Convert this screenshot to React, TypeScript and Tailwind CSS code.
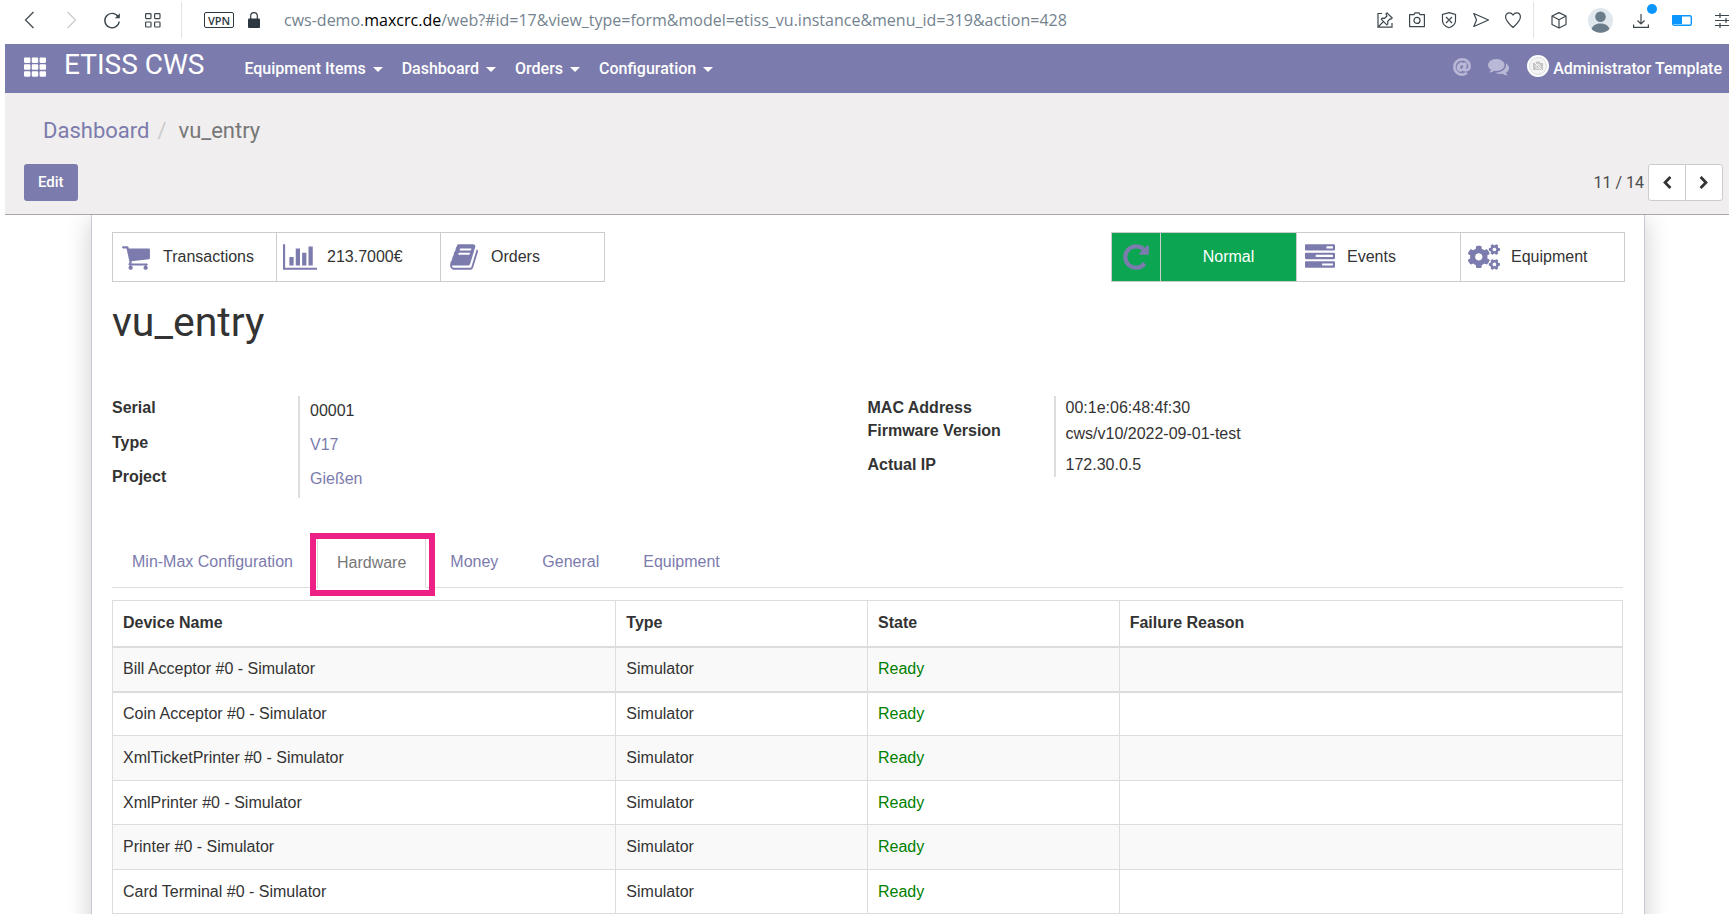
import type { ReactNode } from "react"
import { FaAt, FaCogs, FaTh } from "react-icons/fa"

type GlyphProps = { d: string; box?: string; className?: string }

function Glyph({ d, box = "0 0 1792 1792", className }: GlyphProps) {
  return (
    <svg viewBox={box} fill="currentColor" className={className} aria-hidden="true">
      <path d={d} />
    </svg>
  )
}

function Line({ children }: { children: ReactNode }) {
  return (
    <svg
      viewBox="0 0 16 16"
      fill="none"
      stroke="currentColor"
      strokeWidth="1.2"
      className="size-4 shrink-0 overflow-visible"
      aria-hidden="true"
    >
      {children}
    </svg>
  )
}

const CART =
  "M704 1536q0 52-38 90t-90 38-90-38-38-90 38-90 90-38 90 38 38 90zm896 0q0 52-38 90t-90 38-90-38-38-90 38-90 90-38 90 38 38 90zm128-1088v512q0 24-16.5 42.5t-40.5 21.5l-1044 122q13 60 13 70 0 16-24 64h920q26 0 45 19t19 45-19 45-45 19h-1024q-26 0-45-19t-19-45q0-11 8-31.5t16-36 21.5-40 15.5-29.5l-177-823h-204q-26 0-45-19t-19-45 19-45 45-19h256q16 0 28.5 6.5t19.5 15.5 13 24.5 8 26 5.5 29.5 4.5 26h1201q26 0 45 19t19 45z"
const CHART =
  "M640 896v512h-256v-512h256zm384-512v1024h-256v-1024h256zm1024 1152v128h-2048v-1536h128v1408h1920zm-640-896v768h-256v-768h256zm384-384v1152h-256v-1152h256z"
const BOOK =
  "M1703 478q40 57 18 129l-275 906q-19 64-76.5 107.5t-122.5 43.5h-923q-77 0-148.5-53.5t-99.5-131.5q-24-67-2-127 0-4 3-27t4-37q1-8-3-21.5t-3-19.5q2-11 8-21t16.5-23.5 16.5-23.5q23-38 45-91.5t30-91.5q3-10 .5-30t-.5-28q3-11 17-28t17-23q21-36 42-92t25-90q1-9-2.5-32t.5-28q4-13 22-30.5t22-22.5q19-26 42.5-84.5t27.5-96.5q1-8-3-25.5t-2-26.5q2-8 9-18t18-23 17-21q8-12 16.5-30.5t15-35 16-36 19.5-32 26.5-23.5 36-11.5 47.5 5.5l-1 3q38-9 51-9h761q74 0 114 56t18 130l-274 906q-36 119-71.5 153.5t-128.5 34.5h-869q-27 0-38 15-11 16-1 43 24 70 144 70h923q29 0 56-15.5t35-41.5l300-987q7-22 5-57 38 15 59 43zm-1064 2q-4 13 2 22.5t20 9.5h608q13 0 25.5-9.5t16.5-22.5l21-64q4-13-2-22.5t-20-9.5h-608q-13 0-25.5 9.5t-16.5 22.5zm-83 256q-4 13 2 22.5t20 9.5h608q13 0 25.5-9.5t16.5-22.5l21-64q4-13-2-22.5t-20-9.5h-608q-13 0-25.5 9.5t-16.5 22.5z"
const REPEAT =
  "M1664 256v448q0 26-19 45t-45 19h-448q-42 0-59-40-17-39 14-69l138-138q-148-137-349-137-104 0-198.5 40.5t-163.5 109.5-109.5 163.5-40.5 198.5 40.5 198.5 109.5 163.5 163.5 109.5 198.5 40.5q119 0 225-52t179-147q7-10 23-12 15 0 25 9l137 138q9 8 9.5 20.5t-7.5 22.5q-109 132-264 204.5t-327 72.5q-156 0-298-61t-245-164-164-245-61-298 61-298 164-245 245-164 298-61q147 0 284.5 55.5t244.5 156.5l130-129q29-31 70-14 39 17 39 59z"
const TASKS =
  "M1024 1408h640v-128h-640v128zm-384-512h1024v-128h-1024v128zm640-512h384v-128h-384v128zm512 832v256q0 26-19 45t-45 19h-1664q-26 0-45-19t-19-45v-256q0-26 19-45t45-19h1664q26 0 45 19t19 45zm0-512v256q0 26-19 45t-45 19h-1664q-26 0-45-19t-19-45v-256q0-26 19-45t45-19h1664q26 0 45 19t19 45zm0-512v256q0 26-19 45t-45 19h-1664q-26 0-45-19t-19-45v-256q0-26 19-45t45-19h1664q26 0 45 19t19 45z"
const COMMENTS =
  "M1408 768q0 139-94 257t-256.5 186.5-353.5 68.5q-86 0-176-16-124 88-278 128-36 9-86 16h-3q-11 0-20.5-8t-11.5-21q-1-3-1-6.5t.5-6.5 2-6l2.5-5 3.5-5.5 4-5 4.5-5 4-4.5q5-6 23-25t26-29.5 22.5-29 25-38.5 20.5-44q-124-72-195-177t-71-224q0-139 94-257t256.5-186.5 353.5-68.5 353.5 68.5 256.5 186.5 94 257zm384 256q0 120-71 224.5t-195 176.5q10 24 20.5 44t25 38.5 22.5 29 26 29.5 23 25q1 1 4 4.5t4.5 5 4 5 3.5 5.5l2.5 5 2 6 .5 6.5-1 6.5q-3 14-13 22t-22 7q-50-7-86-16-154-40-278-128-90 16-176 16-271 0-472-132 58 4 88 4 161 0 309-45t264-129q125-92 192-212t67-254q0-77-23-152 129 71 204 178t75 230z"
const CHEVRON_LEFT =
  "M1427 301l-531 531 531 531q19 19 19 45t-19 45l-166 166q-19 19-45 19t-45-19l-742-742q-19-19-19-45t19-45l742-742q19-19 45-19t45 19l166 166q19 19 19 45t-19 45z"
const CHEVRON_RIGHT =
  "M1363 877l-742 742q-19 19-45 19t-45-19l-166-166q-19-19-19-45t19-45l531-531-531-531q-19-19-19-45t19-45l166-166q19-19 45-19t45 19l742 742q19 19 19 45t-19 45z"

function BrowserBar() {
  return (
    <div className="flex h-11 items-center bg-white pb-1 text-[#3c464d]">
      <div className="flex shrink-0 items-center gap-[25px] pl-[22px]">
        <button aria-label="Back">
          <Line>
            <path d="M11.5 0 3.5 8l8 8" />
          </Line>
        </button>
        <button aria-label="Forward" className="text-[#c9c9c9]">
          <Line>
            <path d="m4.5 0 8 8-8 8" />
          </Line>
        </button>
        <button aria-label="Reload">
          <Line>
            <path d="M14 4.5A7.2 7.2 0 1 0 15.2 9.5" strokeWidth="1.4" />
            <path d="M15.8 1.2v5h-5z" fill="currentColor" stroke="none" />
          </Line>
        </button>
        <button aria-label="Speed dial">
          <Line>
            <rect x=".6" y="1.6" width="5.4" height="5" rx=".8" />
            <rect x="9.6" y="1.6" width="5.4" height="5" rx=".8" />
            <rect x=".6" y="10" width="5.4" height="5" rx=".8" />
            <rect x="9.6" y="10" width="5.4" height="5" rx=".8" />
          </Line>
        </button>
      </div>
      <div className="ml-5 h-9 w-px shrink-0 bg-[#e3e3e3]" />
      <span className="ml-[22px] flex h-4 w-[30px] shrink-0 items-center justify-center rounded-xs border border-[#2c3841] font-['Open_Sans',sans-serif] text-[11px] leading-none font-semibold text-[#2c3841]">
        VPN
      </span>
      <svg viewBox="0 0 12 16" className="ml-3.5 h-4 w-3 shrink-0" aria-hidden="true">
        <path d="M2.7 7V4a3.3 3.3 0 0 1 6.6 0v3" fill="none" stroke="#2c3841" strokeWidth="1.2" />
        <rect y="6.5" width="12" height="9.5" rx="1" fill="#2c3841" />
      </svg>
      <p className="ml-6 min-w-0 flex-1 truncate font-['Open_Sans',sans-serif] text-base text-[#74838f]">
        cws-demo.<span className="text-black">maxcrc.de</span>
        /web?#id=17&amp;view_type=form&amp;model=etiss_vu.instance&amp;menu_id=319&amp;action=428
      </p>
      <div className="flex shrink-0 items-center gap-4">
        <Line>
          <path d="M5 1.500H1v13.700h14V11M1 15.200 6.500 9.500" />
          <path d="m10 .8 5.200 5.200-1.200 1.200-1-.3-2.300 2.600.1 2.300-1 1-5.600-5.600 1-1 2.400.1L10 4 9 2z" strokeLinejoin="round" />
        </Line>
        <Line>
          <path d="M.6 2.600H5L6 .8h4l1 1.800h4.400v12H.6z" strokeLinejoin="round" />
          <circle cx="8" cy="8.400" r="3" />
        </Line>
        <Line>
          <path d="m8 .6 6.500 1.900v6c0 3.500-3 6-6.500 7.200C4.500 14.500 1.500 12 1.500 8.500v-6zM5 5l6 6M11 5l-6 6" />
        </Line>
        <Line>
          <path d="M.8 1.500 15.500 8 .8 14.500 3.500 8z" strokeLinejoin="round" />
        </Line>
        <Line>
          <path d="M8 15.500C3 11 .6 8.500.6 5 .6 2.300 2.300.8 4.400.8 6 .8 7.200 1.700 8 3 8.800 1.700 10 .8 11.600.8c2.100 0 3.800 1.500 3.800 4.200 0 3.500-2.400 6-7.400 10.500z" />
        </Line>
      </div>
      <div className="ml-3 h-9 w-px shrink-0 bg-[#e3e3e3]" />
      <div className="ml-[17px] flex shrink-0 items-center">
        <Line>
          <path d="M8 .6 15 4v8.500L8 16l-7-3.500V4zM1 4l7 3.700L15 4M8 7.700V16" strokeLinejoin="round" />
        </Line>
        <svg viewBox="0 0 25 25" className="ml-[21px] size-[25px]" aria-hidden="true">
          <circle cx="12.500" cy="12.500" r="12.500" fill="#e0e8ee" />
          <circle cx="12.500" cy="8.700" r="5.300" fill="#6b7c8b" />
          <path d="M3.500 21c1.500-4 5-5.500 9-5.500s7.500 1.500 9 5.500c-5 5-13 5-18 0z" fill="#6b7c8b" />
        </svg>
        <span className="relative ml-5">
          <Line>
            <path d="M8 2v9.500M4.500 8.500 8 12l3.500-3.500M.6 12.500v2.900h14.800v-2.900" />
          </Line>
          <span className="absolute -top-2 left-3.5 size-2.5 rounded-full bg-[#0a96fc]" />
        </span>
        <svg viewBox="0 0 20 11" className="ml-[23px] h-[11px] w-5" aria-hidden="true">
          <rect x=".7" y=".7" width="18.600" height="9.600" rx="1.500" fill="none" stroke="#0a96fc" strokeWidth="1.400" />
          <path d="M0 1a1 1 0 0 1 1-1h9v9H0z" fill="#0a96fc" />
        </svg>
        <svg
          viewBox="0 0 14 16"
          fill="none"
          stroke="currentColor"
          strokeWidth="1.200"
          className="ml-[23px] h-4 w-3.5"
          aria-hidden="true"
        >
          <path d="M0 3.500h14M0 8.500h14M0 13.500h14M5 1v5M11 6v5M5 11v5" />
        </svg>
      </div>
    </div>
  )
}

function Caret() {
  return (
    <span className="ml-[7px] inline-block border-x-[5px] border-t-[5px] border-x-transparent border-t-white align-middle" />
  )
}

function Navbar() {
  return (
    <header className="flex h-[49px] items-center overflow-hidden bg-[#7c7bad] pl-[19px] font-[Roboto,sans-serif] text-white">
      <button aria-label="Applications" className="mb-1">
        <FaTh className="size-[22px]" />
      </button>
      <span className="ml-[18px] pb-2 text-[28px] leading-9 whitespace-nowrap">ETISS CWS</span>
      <nav className="ml-10 flex gap-[19px] text-base font-medium">
        {["Equipment Items", "Dashboard", "Orders", "Configuration"].map((item) => (
          <button key={item} className="whitespace-nowrap">
            {item}
            <Caret />
          </button>
        ))}
      </nav>
      <div className="ml-auto flex shrink-0 items-center">
        <FaAt className="mb-1 size-[18px] text-[#b9b8d6]" stroke="currentColor" strokeWidth="14" />
        <Glyph d={COMMENTS} className="mb-1 ml-[17px] size-[21px] text-[#b9b8d6]" />
        <span className="mb-1.5 ml-[18px] flex size-[22px] items-center justify-center rounded-full bg-white">
          <svg viewBox="0 0 18 18" className="size-[18px]" aria-hidden="true">
            <circle cx="9" cy="9" r="8.500" fill="#f4f4f4" stroke="#dcdcdc" />
            <path d="M4 6h2.500l1-1.500h3L11.500 6H14v7H4z" fill="#c4c4c4" />
            <circle cx="9" cy="9.300" r="2.200" fill="none" stroke="#f4f4f4" />
            <path d="m3 3 12 12" stroke="#f4f4f4" />
          </svg>
        </span>
        <button className="-mr-2.5 ml-1 text-base font-medium">
          Administrator Template
          <Caret />
        </button>
      </div>
    </header>
  )
}

function ControlPanel() {
  return (
    <div className="border-b border-[#a8a8a8] bg-[#f0eeee] pr-1.5 pb-[13px] pl-[19px] font-[Roboto,sans-serif]">
      <ol className="flex pt-6 pl-[19px] text-[22px] leading-7">
        <li>
          <a href="#dashboard" className="text-[#7c7bad]">
            Dashboard
          </a>
        </li>
        <li className="px-2 text-[#ccc]">/</li>
        <li className="ml-1 text-[#777]">vu_entry</li>
      </ol>
      <div className="mt-[19px] flex items-center">
        <button className="h-[37px] rounded-[3px] bg-[#7c7bad] px-3.5 text-[15px] font-medium text-white">Edit</button>
        <span className="ml-auto text-base text-[#4c4c4c]">11 / 14</span>
        <div className="ml-1 flex">
          <button
            aria-label="Previous"
            className="flex h-[37px] w-[38px] items-center justify-center rounded-l-[3px] border border-[#ccc] bg-white"
          >
            <Glyph d={CHEVRON_LEFT} className="size-3.5 text-[#333]" />
          </button>
          <button
            aria-label="Next"
            className="-ml-px flex h-[37px] w-[38px] items-center justify-center rounded-r-[3px] border border-[#ccc] bg-white"
          >
            <Glyph d={CHEVRON_RIGHT} className="size-3.5 text-[#333]" />
          </button>
        </div>
      </div>
    </div>
  )
}

function StatButton({ icon, label }: { icon: ReactNode; label: string }) {
  return (
    <button className="-ml-px flex h-[50px] w-[165px] items-center border border-[#ccc] bg-white">
      <span className="flex w-[46px] justify-center text-[#7c7bad]">{icon}</span>
      <span className="ml-1">{label}</span>
    </button>
  )
}

function ButtonBox() {
  return (
    <div className="-mr-0.5 flex justify-between">
      <div className="flex pl-px">
        <StatButton icon={<Glyph d={CART} className="size-[30px]" />} label="Transactions" />
        <StatButton icon={<Glyph d={CHART} box="0 0 2048 1792" className="h-[30px] w-[34px]" />} label="213.7000€" />
        <StatButton icon={<Glyph d={BOOK} className="size-[30px]" />} label="Orders" />
      </div>
      <div className="flex">
        <button
          aria-label="Refresh"
          className="flex h-[50px] w-[50px] items-center justify-center border border-[#ccc] bg-[#0ca551]"
        >
          <Glyph d={REPEAT} className="size-[30px] text-[#7c7bad]" />
        </button>
        <button className="-ml-px h-[50px] w-[137px] border border-[#ccc] bg-[#0ca551] text-white">Normal</button>
        <StatButton icon={<Glyph d={TASKS} className="size-[30px]" />} label="Events" />
        <StatButton icon={<FaCogs className="size-8" />} label="Equipment" />
      </div>
    </div>
  )
}

function Details() {
  const label = "w-[186px] font-bold leading-6"
  const value = "flex-1 border-l-2 border-[#ddd] pl-2.5 leading-6"
  return (
    <div className="mt-[49px] grid grid-cols-2 items-start">
      <dl>
        <div className="flex h-[34px]">
          <dt className={label}>Serial</dt>
          <dd className={`${value} pt-[3px]`}>00001</dd>
        </div>
        <div className="flex h-[34px]">
          <dt className={`${label} pt-px`}>Type</dt>
          <dd className={`${value} pt-[3px]`}>
            <a href="#type" className="text-[#7c7bad]">
              V17
            </a>
          </dd>
        </div>
        <div className="flex h-[34px]">
          <dt className={`${label} pt-px`}>Project</dt>
          <dd className={`${value} pt-[3px]`}>
            <a href="#project" className="text-[#7c7bad]">
              Gießen
            </a>
          </dd>
        </div>
      </dl>
      <dl>
        <div className="flex h-[23px]">
          <dt className={label}>MAC Address</dt>
          <dd className={value}>00:1e:06:48:4f:30</dd>
        </div>
        <div className="flex h-[34px]">
          <dt className={label}>Firmware Version</dt>
          <dd className={`${value} pt-[3px]`}>cws/v10/2022-09-01-test</dd>
        </div>
        <div className="flex h-6">
          <dt className={label}>Actual IP</dt>
          <dd className={value}>172.30.0.5</dd>
        </div>
      </dl>
    </div>
  )
}

function Tabs() {
  const tab = "h-[50px] border border-transparent px-[19px] text-[#7c7bad]"
  return (
    <div role="tablist" className="mt-[39px] flex gap-1 border-b border-[#ddd]">
      <button role="tab" className={tab}>
        Min-Max Configuration
      </button>
      <button
        role="tab"
        aria-selected="true"
        className="relative -mb-px h-[51px] border border-b-0 border-[#ddd] bg-white px-[19px] text-[#777]"
      >
        Hardware
        <span className="absolute -top-[5px] -right-2.5 -bottom-2 -left-2 border-6 border-[#ed2085]" />
      </button>
      <button role="tab" className={tab}>
        Money
      </button>
      <button role="tab" className={tab}>
        General
      </button>
      <button role="tab" className={tab}>
        Equipment
      </button>
    </div>
  )
}

const devices = ["Bill Acceptor", "Coin Acceptor", "XmlTicketPrinter", "XmlPrinter", "Printer", "Card Terminal"]

function DeviceTable() {
  const cell = "border border-[#ddd] px-2.5 text-left"
  return (
    <table className="mt-3 w-full table-fixed border-collapse">
      <thead>
        <tr className="h-[46px] border-b-2 border-[#ddd]">
          <th className={`${cell} w-1/3`}>Device Name</th>
          <th className={`${cell} w-1/6`}>Type</th>
          <th className={`${cell} w-1/6`}>State</th>
          <th className={`${cell} w-1/3`}>Failure Reason</th>
        </tr>
      </thead>
      <tbody>
        {devices.map((name) => (
          <tr key={name} className="border-[#ddd] first:border-b-2 odd:h-[45px] odd:bg-[#f9f9f9] even:h-11">
            <td className={cell}>{name} #0 - Simulator</td>
            <td className={cell}>Simulator</td>
            <td className={`${cell} text-[#008000]`}>Ready</td>
            <td className={cell} />
          </tr>
        ))}
      </tbody>
    </table>
  )
}

export default function App() {
  return (
    <div className="h-screen overflow-hidden bg-white">
      <BrowserBar />
      <div className="ml-[5px]">
        <Navbar />
        <ControlPanel />
        <div className="overflow-hidden">
          <main className="mr-[84px] ml-[86px] border-x border-[#c8c8d3] pt-[17px] pr-[21px] pb-10 pl-5 font-['Liberation_Sans',Arial,sans-serif] text-base text-[#333] shadow-[0_5px_24px_rgba(0,0,0,0.2)]">
            <ButtonBox />
            <h1 className="mt-4 font-[Roboto,sans-serif] text-[41px] leading-[49px]">vu_entry</h1>
            <Details />
            <Tabs />
            <DeviceTable />
          </main>
        </div>
      </div>
    </div>
  )
}
